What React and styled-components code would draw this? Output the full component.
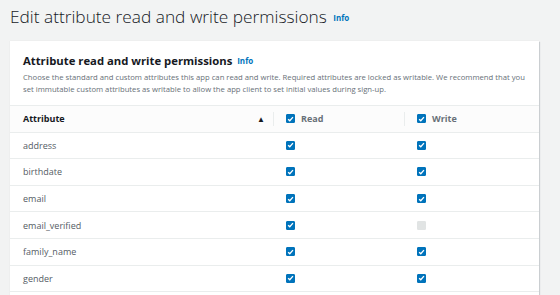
import styled, { createGlobalStyle } from "styled-components";

const rows = [
	{ name: "address", read: true, write: true },
	{ name: "birthdate", read: true, write: true },
	{ name: "email", read: true, write: true },
	{ name: "email_verified", read: true, write: false, locked: true },
	{ name: "family_name", read: true, write: true },
	{ name: "gender", read: true, write: true },
];

function Check({ checked, disabled }) {
	return (
		<Box checked={checked} disabled={disabled}>
			{checked && (
				<svg width="8" height="8" viewBox="0 0 8 8">
					<path d="M1.3 4.2 L3.2 6 L6.8 1.8" fill="none" stroke="#fff" strokeWidth="1.5" />
				</svg>
			)}
		</Box>
	);
}

export default function App() {
	return (
		<>
			<GlobalStyle />
			<Page>
				<Title>
					Edit attribute read and write permissions <Info>Info</Info>
				</Title>

				<Card>
					<CardHead>
						<h2>
							Attribute read and write permissions <Info small>Info</Info>
						</h2>
						<p>
							Choose the standard and custom attributes this app can read and write. Required attributes are locked as writable. We recommend that you set immutable custom attributes as writable to allow the app client to set initial values during sign-up.
						</p>
					</CardHead>

					<Table>
						<HeaderRow>
							<HeadCell>
								Attribute
								<Sort>▲</Sort>
							</HeadCell>
							<HeadCell divided>
								<Check checked />
								Read
							</HeadCell>
							<HeadCell divided>
								<Check checked />
								Write
							</HeadCell>
						</HeaderRow>

						{rows.map((row) => (
							<Row key={row.name}>
								<Cell>{row.name}</Cell>
								<Cell>
									<Check checked={row.read} />
								</Cell>
								<Cell>
									<Check checked={row.write} disabled={row.locked} />
								</Cell>
							</Row>
						))}
					</Table>
				</Card>
			</Page>
		</>
	);
}

// UI
const GlobalStyle = createGlobalStyle`
	body {
		margin: 0;
		background: #f2f3f3;
		font-family: "Open Sans", "Liberation Sans", sans-serif;
		overflow: hidden;
	}
`;

const Page = styled.div`
	padding: 3px 21px 0 10px;
	height: 295px;
	overflow: hidden;
`;

const Title = styled.h1`
	margin: 0;
	font-size: 17.3px;
	font-weight: 300;
	color: #16191f;
	line-height: 27px;
`;

const Info = styled.span`
	font-size: 8px;
	font-weight: 700;
	color: #0073bb;
	margin-left: 2px;
	vertical-align: ${(p) => (p.small ? "1px" : "2px")};
`;

const Card = styled.div`
	margin-top: 10px;
	min-height: 300px;
	background: #ffffff;
	box-shadow: 1px 1px 1px rgba(0, 22, 40, 0.15), 0 0 1px rgba(0, 22, 40, 0.1);
`;

const CardHead = styled.div`
	padding: 11px 13px 10px 13px;
	border-bottom: 1px solid #eaeded;

	h2 {
		margin: 0;
		font-size: 11.3px;
		font-weight: 700;
		color: #16191f;
		line-height: 17px;
	}

	p {
		margin: 2px 0 0;
		font-size: 7.7px;
		line-height: 12px;
		color: #687078;
	}
`;

const Table = styled.div`
	display: flex;
	flex-direction: column;
`;

const HeaderRow = styled.div`
	display: grid;
	grid-template-columns: 263px 131px 1fr;
	height: 25.6px;
	border-bottom: 1px solid #eaeded;
	background: #fcfcfc;
`;

const Row = styled.div`
	display: grid;
	grid-template-columns: 263px 131px 1fr;
	height: 25.6px;
	border-bottom: 1px solid #eaeded;
`;

const HeadCell = styled.div`
	display: flex;
	align-items: center;
	gap: 6px;
	padding-left: 13px;
	font-size: 9px;
	font-weight: 700;
	color: ${(p) => (p.divided ? "#687078" : "#16191f")};
	position: relative;

	&::before {
		content: "";
		display: ${(p) => (p.divided ? "block" : "none")};
		position: absolute;
		left: 0;
		top: 6px;
		bottom: 6px;
		border-left: 1px solid #eaeded;
	}
`;

const Sort = styled.span`
	margin-left: auto;
	margin-right: 8px;
	font-size: 8px;
	color: #16191f;
`;

const Cell = styled.div`
	display: flex;
	align-items: center;
	padding-left: 13px;
	font-size: 9px;
	color: #545b64;
`;

const Box = styled.span`
	display: inline-flex;
	align-items: center;
	justify-content: center;
	width: 9px;
	height: 9px;
	border-radius: 1px;
	background: ${(p) => (p.checked ? "#0073bb" : p.disabled ? "#e1e4e4" : "#fff")};
	border: 1px solid ${(p) => (p.checked ? "#0073bb" : p.disabled ? "#e1e4e4" : "#aab7b8")};
	box-sizing: border-box;
	flex: none;
`;
